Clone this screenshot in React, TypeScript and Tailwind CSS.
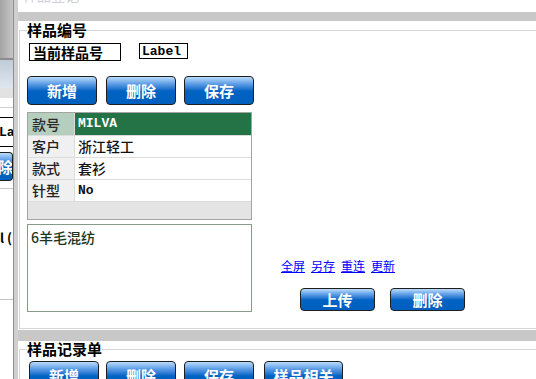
import React from "react";

const btn =
  "shrink-0 flex items-center justify-center text-white font-bold text-[15px] leading-none border border-[#1e1e1e] rounded-[4px] bg-[linear-gradient(to_bottom,#bcdcfa_0%,#6aa6ea_22%,#1c70cc_46%,#0062c2_52%,#0060c0_100%)]";

function Row({ label, value, first, mono }: { label: string; value: string; first?: boolean; mono?: boolean }) {
  return (
    <div className={`flex shrink-0 h-[22px] ${first ? "" : "border-t border-[#dcdcdc]"}`}>
      <div
        className={`w-[47px] shrink-0 flex items-center pl-[4px] text-[14px] font-medium border-r border-[#dcdcdc] ${
          first ? "bg-[#b6cebe] text-[#2a2a2a]" : "bg-[#f0f0f0] text-[#222]"
        }`}
      >
        {label}
      </div>
      <div
        className={`flex-1 flex items-center pl-[3px] ${
          first ? "bg-[#237346] text-white" : "bg-white text-[#111]"
        } ${mono ? "font-['Liberation_Mono',monospace] font-bold text-[13px]" : "text-[14px] font-medium"}`}
      >
        {value}
      </div>
    </div>
  );
}

export default function App() {
  return (
    <div className="w-[536px] h-[379px] overflow-hidden flex bg-white font-['Noto_Sans_CJK_SC',sans-serif]">
      {/* background window strip */}
      <div className="w-[13px] shrink-0 flex flex-col overflow-hidden">
        <div className="shrink-0 h-[58px] bg-[linear-gradient(to_right,#a4a4a4,#c6c6c6)]" />
        <div className="shrink-0 h-[2px] bg-[#8c8c8c]" />
        <div className="shrink-0 h-[28px] bg-[linear-gradient(to_bottom,#c0ccd8,#dfe6ee)]" />
        <div className="shrink-0 h-[10px] bg-[#e2e2e2]" />
        <div className="shrink-0 h-[10px] bg-white border-b border-[#d0d0d0]" />
        <div className="shrink-0 h-[9px] bg-white" />
        <div className="shrink-0 h-[30px] border-y border-black flex items-center">
          <span className="-ml-[1px] font-['Liberation_Mono',monospace] font-bold text-[13px] leading-none text-black whitespace-nowrap">
            Label
          </span>
        </div>
        <div className="shrink-0 h-[5px]" />
        <div className="shrink-0 h-[29px] w-[13px] flex items-center text-white font-bold text-[15px] leading-none border-y border-r border-[#1e1e1e] rounded-r-[4px] bg-[linear-gradient(to_bottom,#bcdcfa_0%,#6aa6ea_22%,#1c70cc_46%,#0062c2_52%,#0060c0_100%)] overflow-hidden">
          <span className="-ml-[2px] whitespace-nowrap">除</span>
        </div>
        <div className="shrink-0 h-[8px] border-b border-[#c8c8c8]" />
        <div className="shrink-0 h-[110px] bg-white pt-[42px]">
          <span className="block font-bold text-[13px] leading-[14px] text-black whitespace-nowrap">l (</span>
        </div>
        <div className="flex-1 border-t border-[#c4c4c4] bg-white" />
      </div>

      {/* window border */}
      <div className="w-[5px] shrink-0 border-l border-[#8e8e8e] bg-[#d0d0d0]" />

      {/* main window */}
      <div className="flex-1 flex flex-col overflow-hidden">
        <div className="shrink-0 h-[12px] overflow-hidden pl-[5px]">
          <div className="-mt-[13px] text-[14px] leading-[16px] text-[#d0d0d8] whitespace-nowrap">样品登记</div>
        </div>
        <div className="shrink-0 h-[9px] bg-[#c8c8c8] -ml-[5px]" />

        {/* section 1 */}
        <div className="shrink-0 h-[309px] pt-[1px]">
          <fieldset className="w-[560px] h-[307px] ml-[1px] border border-[#d6d6d6] pl-[7px] pr-0 pb-0 pt-0 m-0 min-w-0">
            <legend className="p-0 text-[15px] leading-[16px] font-bold text-black">样品编号</legend>
            <div className="flex items-start mt-[5px]">
              <div className="shrink-0 ml-[2px] w-[92px] h-[18px] border border-black flex items-center pl-[3px] text-[14px] leading-none font-bold text-black">
                当前样品号
              </div>
              <div className="shrink-0 ml-[18px] w-[49px] h-[16px] border border-black flex items-center pl-[2px] font-['Liberation_Mono',monospace] font-bold text-[13px] leading-none text-black">
                Label
              </div>
            </div>
            <div className="flex mt-[15px]">
              <div className={`${btn} w-[70px] h-[29px]`}>新增</div>
              <div className={`${btn} w-[70px] h-[29px] ml-[9px]`}>删除</div>
              <div className={`${btn} w-[70px] h-[29px] ml-[8px]`}>保存</div>
            </div>
            <div className="flex mt-[7px]">
              <div className="w-[225px] shrink-0 flex flex-col">
                <div className="shrink-0 h-[108px] border border-[#a4a4a4] flex flex-col">
                  <Row label="款号" value="MILVA" first mono />
                  <Row label="客户" value="浙江轻工" />
                  <Row label="款式" value="套衫" />
                  <Row label="针型" value="No" mono />
                  <div className="flex-1 bg-[#e4e4e4] border-t border-[#dcdcdc]" />
                </div>
                <div className="shrink-0 mt-[4px] h-[88px] border border-[#889a88] pl-[3px] pt-[4px] text-[14px] leading-[16px] font-medium text-[#1c361c]">
                  6羊毛混纺
                </div>
              </div>
              <div className="flex flex-col pt-[147px] ml-[29px]">
                <div className="flex gap-[6px] text-[12px] leading-[14px] text-[#0000ff] underline">
                  <span>全屏</span>
                  <span>另存</span>
                  <span>重连</span>
                  <span>更新</span>
                </div>
                <div className="flex mt-[15px] ml-[19px]">
                  <div className={`${btn} w-[75px] h-[23px]`}>上传</div>
                  <div className={`${btn} w-[75px] h-[23px] ml-[15px]`}>删除</div>
                </div>
              </div>
            </div>
          </fieldset>
        </div>

        <div className="h-[11px] bg-[#c8c8c8] -ml-[5px] shrink-0" />

        {/* section 2 */}
        <div className="shrink-0">
          <fieldset className="w-[560px] h-[80px] ml-[1px] border border-[#d6d6d6] pl-[7px] pr-0 pb-0 pt-0 m-0 min-w-0">
            <legend className="p-0 text-[15px] leading-[16px] font-bold text-black">样品记录单</legend>
            <div className="flex mt-[4px] ml-[2px]">
              <div className={`${btn} w-[70px] h-[29px]`}>新增</div>
              <div className={`${btn} w-[70px] h-[29px] ml-[7px]`}>删除</div>
              <div className={`${btn} w-[70px] h-[29px] ml-[8px]`}>保存</div>
              <div className={`${btn} w-[79px] h-[29px] ml-[10px]`}>样品相关</div>
            </div>
          </fieldset>
        </div>
      </div>
    </div>
  );
}
